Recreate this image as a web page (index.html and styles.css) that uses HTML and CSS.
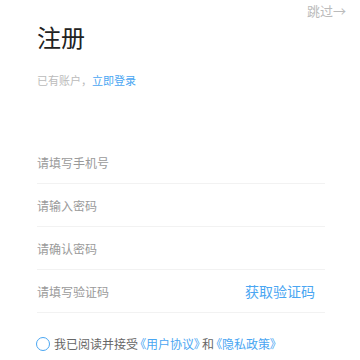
FILE: index.html
```html
<!DOCTYPE html>
<html lang="zh-CN">
<head>
    <meta charset="UTF-8">
    <meta name="viewport" content="width=device-width, initial-scale=1.0">
    <title>注册</title>
    <link rel="stylesheet" href="styles.css">
</head>
<body>
    <div class="page">
        <div class="topbar">
            <a class="skip" href="#">跳过→</a>
        </div>
        <h1 class="title">注册</h1>
        <p class="sub">已有账户，<a class="link" href="#">立即登录</a></p>

        <form class="form">
            <div class="row">
                <input type="text" placeholder="请填写手机号">
            </div>
            <div class="row">
                <input type="password" placeholder="请输入密码">
            </div>
            <div class="row">
                <input type="password" placeholder="请确认密码">
            </div>
            <div class="row">
                <input type="text" placeholder="请填写验证码">
                <button type="button" class="code-btn">获取验证码</button>
            </div>
        </form>

        <label class="agree">
            <span class="radio"></span>
            <span>我已阅读并接受<a class="link doc" href="#">《用户协议》</a>和<a class="link doc" href="#">《隐私政策》</a></span>
        </label>
    </div>
</body>
</html>
```

FILE: styles.css
```css
* {
    box-sizing: border-box;
    font-family: "Noto Sans CJK SC", "Noto Sans", sans-serif;
}

body {
    margin: 0;
    background: #fff;
}

a {
    text-decoration: none;
}

.page {
    width: 360px;
    height: 360px;
    padding: 0 35px 0 37px;
}

.topbar {
    display: flex;
    justify-content: flex-end;
    margin-right: -21px;
    height: 20px;
    padding-top: 1px;
}

.skip {
    font-size: 13px;
    line-height: 19px;
    color: #bbb;
}

.title {
    margin: 0;
    font-size: 24px;
    font-weight: 400;
    line-height: 34px;
    color: #222;
}

.sub {
    margin: 18px 0 0;
    font-size: 11px;
    line-height: 16px;
    color: #bbb;
}

.link {
    color: #4aa6f2;
}

.doc {
    font-feature-settings: "palt";
    margin: 0 2px;
}

.form {
    margin-top: 53px;
}

.row {
    display: flex;
    align-items: center;
    height: 43px;
    border-bottom: 1px solid #f2f2f2;
}

.row input {
    flex: 1;
    min-width: 0;
    border: none;
    outline: none;
    padding: 0;
    font-size: 12px;
    color: #333;
    background: transparent;
}

.row input::placeholder {
    color: #9a9a9a;
}

.code-btn {
    border: none;
    background: none;
    padding: 0 10px 0 0;
    font-size: 14px;
    color: #4aa6f2;
    cursor: pointer;
}

.agree {
    display: flex;
    align-items: center;
    margin-top: 22px;
    margin-left: -1px;
    font-size: 12px;
    color: #666;
}

.radio {
    width: 14px;
    height: 14px;
    border: 1.5px solid #4aa6f2;
    border-radius: 50%;
    margin-right: 4px;
}
```
